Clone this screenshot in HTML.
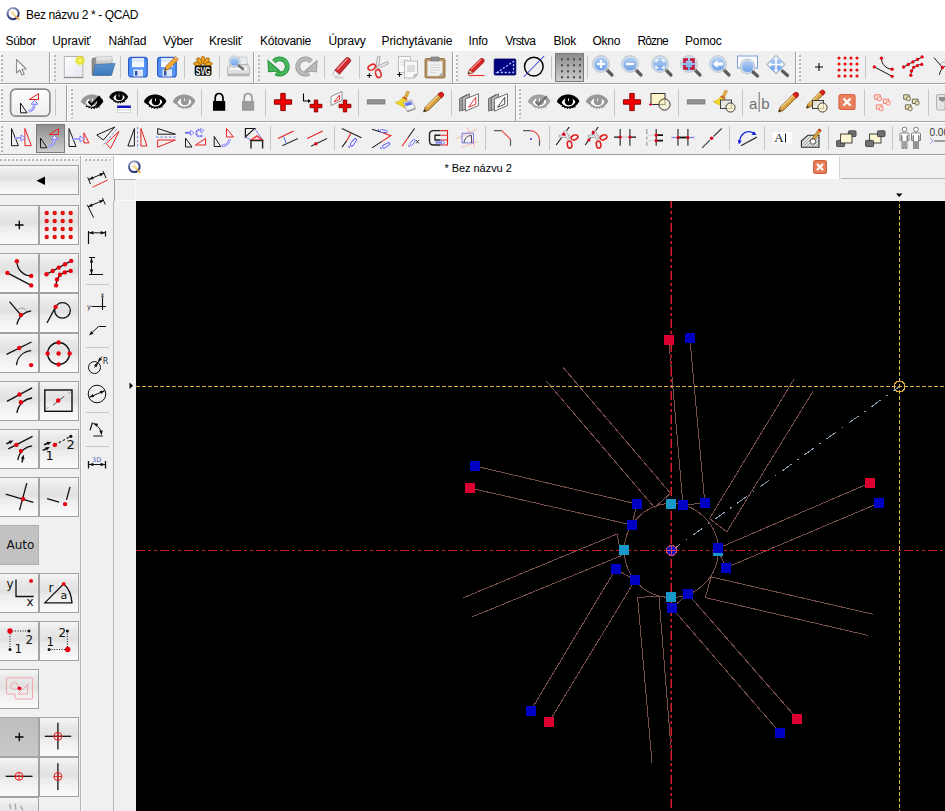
<!DOCTYPE html>
<html><head><meta charset="utf-8"><title>Bez názvu 2 * - QCAD</title>
<style>
*{box-sizing:border-box;margin:0;padding:0}
html,body{width:945px;height:811px;overflow:hidden;background:#f0f0f0;font-family:"Liberation Sans",sans-serif;font-size:12px;color:#000}
body{position:relative}
.a{position:absolute}
.ic{position:absolute;overflow:visible}
#title{left:0;top:0;width:945px;height:30px;background:#fff}
#title span{position:absolute;left:26px;top:8px;font-size:12px;white-space:nowrap;letter-spacing:-.37px}
#menu{left:0;top:30px;width:945px;height:21px;background:#fff}
#menu span{position:absolute;top:4px;white-space:nowrap;font-size:12px}
.vs{position:absolute;width:1px;background:#c6c6c6}
.hs{position:absolute;height:1px;background:#c6c6c6}
.tbv{position:absolute;width:2px;background:linear-gradient(90deg,#a0a0a0 50%,#fff 50%)}
.tbh{position:absolute;height:2px;background:linear-gradient(#a0a0a0 50%,#fff 50%)}
.gv{position:absolute;width:3px;background:linear-gradient(#b6b6b6 0 2px,transparent 2px 4px) 1px 1px/2px 4px repeat-y,linear-gradient(#fff 0 2px,transparent 2px 4px) 0 0/2px 4px repeat-y}
.gh{position:absolute;height:3px;background:linear-gradient(90deg,#b6b6b6 0 2px,transparent 2px 4px) 1px 1px/4px 2px repeat-x,linear-gradient(90deg,#fff 0 2px,transparent 2px 4px) 0 0/4px 2px repeat-x}
.pb{position:absolute;border:1px solid #7c7c7c;background:linear-gradient(#8e8e8e,#cdcdcd)}
.sb{position:absolute;width:40px;height:40px;border:1px solid #a2a2a2;background:linear-gradient(#f7f7f7 0,#eaeaea 18%,#e1e1e1 47%,#ececec 56%,#fbfbfb 100%)}
.sb svg{position:absolute;left:3px;top:3px;overflow:visible}
#canvas{left:136px;top:201px;width:809px;height:610px;background:#000}
</style></head><body>
<svg width="0" height="0" style="position:absolute"><defs>
<linearGradient id="gDoc" x1="0" y1="0" x2="1" y2="1"><stop offset="0" stop-color="#fff"/><stop offset="1" stop-color="#e4e6ee"/></linearGradient>
<radialGradient id="gGlow"><stop offset="0" stop-color="#ffff90"/><stop offset=".55" stop-color="#e8e020"/><stop offset="1" stop-color="#e8e020" stop-opacity="0"/></radialGradient>
<linearGradient id="gFold" x1="0" y1="0" x2="0" y2="1"><stop offset="0" stop-color="#5a92d0"/><stop offset="1" stop-color="#3c78b8"/></linearGradient>
<linearGradient id="gPaper" x1="0" y1="0" x2="0" y2="1"><stop offset="0" stop-color="#f4f4f4"/><stop offset="1" stop-color="#a8a8a8"/></linearGradient>
<linearGradient id="gFlop" x1="0" y1="0" x2="0" y2="1"><stop offset="0" stop-color="#4a8cf4"/><stop offset="1" stop-color="#5a98f8"/></linearGradient>
<linearGradient id="gLens" x1="0" y1="0" x2="0" y2="1"><stop offset="0" stop-color="#b4d0f4"/><stop offset="1" stop-color="#6ea2e6"/></linearGradient>
<linearGradient id="gBtn" x1="0" y1="0" x2="0" y2="1"><stop offset="0" stop-color="#8c8c8c"/><stop offset="1" stop-color="#c8c8c8"/></linearGradient>
<linearGradient id="gPencil" x1="0" y1="0" x2="1" y2="1"><stop offset="0" stop-color="#e8b860"/><stop offset="1" stop-color="#b07820"/></linearGradient>
<g id="mag"><circle cx="10" cy="10" r="7.6" fill="#d8e4f0" stroke="#b4bcc8" stroke-width="1"/><circle cx="10" cy="10" r="6" fill="url(#gLens)"/><path d="M15.5 15.5 L21 21" stroke="#606060" stroke-width="3" stroke-linecap="round"/><path d="M14.5 14.5 L16 16" stroke="#a0a0a0" stroke-width="2"/></g>
<g id="eye"><path d="M0.8 11.5 C3 6.5 8 4.6 12 4.6 C17 4.6 21.5 7 23.4 11.2 C22.5 13 21.2 14.6 19.3 16 L19.8 17.6 L17.8 16.9 L17.2 18.6 L15.5 17.4 L14.2 19.2 L13 17.7 L11.2 19.2 L10.4 17.5 L8.2 18.5 L8.1 16.7 L5.6 17.2 L6.1 15.4 C4 14.5 1.8 13.2 0.8 11.5 Z"/><path d="M5.6 12.4 C7.5 8.8 10 7.8 12.5 7.8 C15.8 7.8 18.3 9.4 19.4 12 C18 15 15.3 16.4 12.5 16.4 C9.7 16.4 7 15 5.6 12.4 Z" fill="#fff"/><circle cx="12.9" cy="11.2" r="4.1"/><path d="M12 8.4 L13.1 8.4 L12.9 11.2 L12.3 11.2 Z" fill="#fff"/></g>
<g id="plusR"><path d="M9.8 3.4 h4.4 v6.4 h6.4 v4.4 h-6.4 v6.4 h-4.4 v-6.4 h-6.4 v-4.4 h6.4 Z" fill="#f00000" stroke="#900000" stroke-width="1"/></g>
<g id="plusS"><path d="M4.8 0.6 h3.4 v4.2 h4.2 v3.4 h-4.2 v4.2 h-3.4 v-4.2 h-4.2 v-3.4 h4.2 Z" fill="#e80000" stroke="#900000" stroke-width="1"/></g>
<g id="pencilY"><path d="M1.5 22 L3.2 17.2 L17.2 3.2 C18.4 2 20 2.2 20.8 3 C21.7 4 21.6 5.4 20.6 6.4 L6.4 20.4 Z" fill="#d8a040" stroke="#7a5818" stroke-width=".8"/><path d="M4.5 17.3 L18 3.8" stroke="#f0cc80" stroke-width="1.4"/><path d="M17 3.4 C18.2 2.2 20 2.4 20.8 3.2 C21.8 4.2 21.8 5.8 20.8 6.8 L19.5 8 L15.8 4.5 Z" fill="#e02020" stroke="#900" stroke-width=".6"/><path d="M1.5 22 L2.6 19 L4.5 21 Z" fill="#403010"/></g>
<g id="broom"><path d="M13 1 L15.5 2 L12.5 8 L10.3 7 Z" fill="#e8b040" stroke="#a87820" stroke-width=".5"/><path d="M9 6.5 L13.5 8.8 L12.8 10.3 L8.3 8 Z" fill="#d04020"/><path d="M8.3 8 L12.8 10.3 C13 14 12 16 11 18 L1 12.5 C4 12 7 10.5 8.3 8 Z" fill="#f0d820" stroke="#c8a810" stroke-width=".5"/></g>
<g id="blk"><path d="M1 0.5 h6.5 v5 h-6.5 Z" stroke-width="1"/><circle cx="6.5" cy="5" r="2.4" stroke-width=".9"/></g>
</defs></svg>
<div id="title" class="a"><svg class="ic" style="left:5px;top:5px" width="18" height="18" viewBox="0 0 18 18"><defs><linearGradient id="gQ" x1="0.2" y1="0" x2="0.7" y2="1"><stop offset="0" stop-color="#a4aecc"/><stop offset=".5" stop-color="#44508c"/><stop offset="1" stop-color="#262c6c"/></linearGradient></defs><circle cx="8.1" cy="8.6" r="5.6" fill="#fbfbfd" stroke="url(#gQ)" stroke-width="2"/><path d="M8.1 8.6 L8.1 5 M8.1 8.6 L4.8 8.6 M8.1 8.6 L5.8 6.2" stroke="#f0d8c0" stroke-width=".8"/><path d="M7.6 8.1 L13.8 14.4" stroke="#e8a848" stroke-width="1.7" stroke-linecap="round"/><path d="M7.4 7.9 L10.5 11" stroke="#f4e090" stroke-width="1.5" stroke-linecap="round"/></svg><span>Bez názvu 2 * - QCAD</span></div>
<div id="menu" class="a"><span style="left:5.5px;letter-spacing:-0.31px">Súbor</span><span style="left:52.3px;letter-spacing:-0.10px">Upraviť</span><span style="left:108.4px;letter-spacing:-0.18px">Náhľad</span><span style="left:163px;letter-spacing:-0.27px">Výber</span><span style="left:209px;letter-spacing:-0.22px">Kresliť</span><span style="left:260px;letter-spacing:-0.26px">Kótovanie</span><span style="left:328.5px;letter-spacing:-0.15px">Úpravy</span><span style="left:381.5px;letter-spacing:-0.09px">Prichytávanie</span><span style="left:468.5px;letter-spacing:-0.18px">Info</span><span style="left:505.3px;letter-spacing:-0.61px">Vrstva</span><span style="left:553.5px;letter-spacing:-0.21px">Blok</span><span style="left:592.6px;letter-spacing:-0.32px">Okno</span><span style="left:637.4px;letter-spacing:-0.86px">Rôzne</span><span style="left:685px;letter-spacing:-0.13px">Pomoc</span></div>
<div class="tbh" style="left:0;top:83px;width:945px"></div>
<div class="tbh" style="left:0;top:121px;width:945px"></div>
<div class="tbh" style="left:0;top:154px;width:945px"></div>
<div class="tbv" style="left:49px;top:52px;height:31px"></div>
<div class="tbv" style="left:253px;top:52px;height:31px"></div>
<div class="tbv" style="left:452px;top:52px;height:31px"></div>
<div class="tbv" style="left:795px;top:52px;height:31px"></div>
<div class="tbv" style="left:66px;top:85px;height:36px"></div>
<div class="tbv" style="left:515px;top:85px;height:36px"></div>
<div class="gv" style="left:0px;top:54px;height:27px"></div>
<div class="gv" style="left:53px;top:54px;height:27px"></div>
<div class="gv" style="left:257px;top:54px;height:27px"></div>
<div class="gv" style="left:455px;top:54px;height:27px"></div>
<div class="gv" style="left:798px;top:54px;height:27px"></div>
<div class="gv" style="left:0px;top:88px;height:30px"></div>
<div class="gv" style="left:70px;top:88px;height:30px"></div>
<div class="gv" style="left:518px;top:88px;height:30px"></div>
<div class="gv" style="left:0px;top:125px;height:27px"></div>
<div class="vs" style="left:120px;top:56px;height:23px"></div>
<div class="vs" style="left:184px;top:56px;height:23px"></div>
<div class="vs" style="left:219px;top:56px;height:23px"></div>
<div class="vs" style="left:324px;top:56px;height:23px"></div>
<div class="vs" style="left:359px;top:56px;height:23px"></div>
<div class="vs" style="left:551px;top:56px;height:23px"></div>
<div class="vs" style="left:587px;top:56px;height:23px"></div>
<div class="vs" style="left:865px;top:56px;height:23px"></div>
<div class="vs" style="left:55px;top:89px;height:27px"></div>
<div class="vs" style="left:137px;top:89px;height:27px"></div>
<div class="vs" style="left:201px;top:89px;height:27px"></div>
<div class="vs" style="left:265px;top:89px;height:27px"></div>
<div class="vs" style="left:358px;top:89px;height:27px"></div>
<div class="vs" style="left:451px;top:89px;height:27px"></div>
<div class="vs" style="left:614px;top:89px;height:27px"></div>
<div class="vs" style="left:678px;top:89px;height:27px"></div>
<div class="vs" style="left:742px;top:89px;height:27px"></div>
<div class="vs" style="left:864px;top:89px;height:27px"></div>
<div class="vs" style="left:928px;top:89px;height:27px"></div>
<div class="vs" style="left:270px;top:126px;height:24px"></div>
<div class="vs" style="left:334px;top:126px;height:24px"></div>
<div class="vs" style="left:485px;top:126px;height:24px"></div>
<div class="vs" style="left:549px;top:126px;height:24px"></div>
<div class="vs" style="left:729px;top:126px;height:24px"></div>
<div class="vs" style="left:764px;top:126px;height:24px"></div>
<div class="vs" style="left:828px;top:126px;height:24px"></div>
<div class="vs" style="left:892px;top:126px;height:24px"></div>
<div class="pb" style="left:555px;top:53px;width:29px;height:29px"></div>
<div class="pb" style="left:36px;top:123.5px;width:29px;height:29px"></div>
<svg class="ic" style="left:8px;top:86px" width="46" height="34" viewBox="0 0 46 34"><defs><linearGradient id="gRB" x1="0" y1="0" x2="0" y2="1"><stop offset="0" stop-color="#fdfdfd"/><stop offset="1" stop-color="#eeeeee"/></linearGradient></defs><rect x="2.6" y="3.2" width="39.3" height="27" rx="5" fill="url(#gRB)" stroke="#8c8c8c" stroke-width="1.7"/></svg>
<svg class="ic" style="left:9px;top:55px" width="24" height="24" viewBox="0 0 24 24"><path d="M7.5 4.5 L7.5 18 L10.8 15 L13 20 L15.2 19 L13 14.2 L17.2 14 Z" fill="#fafafa" stroke="#8c8c8c" stroke-width="1.1" stroke-linejoin="round"/></svg>
<svg class="ic" style="left:62px;top:55px" width="24" height="24" viewBox="0 0 24 24"><rect x="2.3" y="1.5" width="18.6" height="21" fill="url(#gDoc)" stroke="#b4b4b4" stroke-width="1"/><path d="M2.3 22.5 h18.6" stroke="#909090" stroke-width="1.4"/><circle cx="18" cy="5.5" r="5.5" fill="url(#gGlow)"/></svg>
<svg class="ic" style="left:91px;top:55px" width="24" height="24" viewBox="0 0 24 24"><path d="M1 4 L1 20 L19 20 L19 5.5 L9 5.5 L8 3 L2 3 Z" fill="#8e8e8e" stroke="#707070" stroke-width=".6"/><path d="M5 2 L21 1.5 L21.5 12 L5 12 Z" fill="url(#gPaper)" stroke="#a0a0a0" stroke-width=".5"/><path d="M4 9.5 L24 8.5 L20.5 20.5 L2 20.5 Z" fill="url(#gFold)" stroke="#35689c" stroke-width=".6"/></svg>
<svg class="ic" style="left:126px;top:55px" width="24" height="24" viewBox="0 0 24 24"><rect x="2.6" y="2.3" width="18.6" height="19.6" rx="2.5" fill="url(#gFlop)" stroke="#2c5cc8" stroke-width="1.2"/><rect x="6" y="3.2" width="12" height="9" fill="#f4f8ff"/><path d="M6 3.2 h12 v4 h-12 Z" fill="#dce8fc"/><rect x="7.5" y="14.5" width="9.5" height="7" fill="#dfe6f4"/><rect x="9" y="16" width="2.4" height="4.5" fill="#2c50b0"/></svg>
<svg class="ic" style="left:155px;top:55px" width="24" height="24" viewBox="0 0 24 24"><rect x="2.6" y="2.3" width="18.6" height="19.6" rx="2.5" fill="url(#gFlop)" stroke="#2c5cc8" stroke-width="1.2"/><rect x="6" y="3.2" width="12" height="9" fill="#f4f8ff"/><path d="M6 3.2 h12 v4 h-12 Z" fill="#dce8fc"/><rect x="7.5" y="14.5" width="9.5" height="7" fill="#dfe6f4"/><rect x="9" y="16" width="2.4" height="4.5" fill="#2c50b0"/><path d="M9.5 15.5 L10.8 11.5 L20.5 1.5 L23.5 4.2 L13.5 14.3 Z" fill="#f0a838" stroke="#b06a10" stroke-width=".7"/><path d="M20.5 1.5 L23.5 4.2 L22.3 5.4 L19.3 2.7 Z" fill="#e8a080"/><path d="M9.5 15.5 L10.2 13.3 L11.6 14.8 Z" fill="#303030"/></svg>
<svg class="ic" style="left:191px;top:55px" width="24" height="24" viewBox="0 0 24 24"><ellipse cx="12" cy="5" rx="2" ry="4" transform="rotate(-76 12 10.5)" fill="#f4a420" stroke="#7a4800" stroke-width=".6"/><ellipse cx="12" cy="5" rx="2" ry="4" transform="rotate(-38 12 10.5)" fill="#f4a420" stroke="#7a4800" stroke-width=".6"/><ellipse cx="12" cy="5" rx="2" ry="4" transform="rotate(0 12 10.5)" fill="#f4a420" stroke="#7a4800" stroke-width=".6"/><ellipse cx="12" cy="5" rx="2" ry="4" transform="rotate(38 12 10.5)" fill="#f4a420" stroke="#7a4800" stroke-width=".6"/><ellipse cx="12" cy="5" rx="2" ry="4" transform="rotate(76 12 10.5)" fill="#f4a420" stroke="#7a4800" stroke-width=".6"/><rect x="3.7" y="10.6" width="16.8" height="10.2" rx="1.8" fill="#0a0a0a"/><text x="12.1" y="19.6" font-family="Liberation Sans, sans-serif" font-weight="bold" font-size="10.5" fill="#fff" text-anchor="middle" textLength="14.6" lengthAdjust="spacingAndGlyphs">SVG</text></svg>
<svg class="ic" style="left:225.5px;top:55px" width="24" height="24" viewBox="0 0 24 24"><path d="M4 9 L18 5 L22 9 L22 18 L4 18 Z" fill="#dcdcdc" stroke="#b4b4b4" stroke-width=".7"/><rect x="13" y="2" width="8" height="9" fill="#e8ecf0" stroke="#b8b8b8" stroke-width=".6"/><path d="M1.5 12 L5 9.5 L21 9.5 L23.5 12 L23.5 19 L1.5 19 Z" fill="#e0e0e0" stroke="#a8a8a8" stroke-width=".7"/><path d="M1.5 19 h22 v2.2 h-22 Z" fill="#b4b4b4"/><path d="M4 13 h17 v1.6 h-17 Z" fill="#f8f8f8"/><circle cx="8.5" cy="6.5" r="5.6" fill="#dfe6ee" stroke="#b0b8c4" stroke-width=".8"/><circle cx="8.5" cy="6.5" r="4.2" fill="url(#gLens)"/><path d="M12.5 10.5 L17 14" stroke="#707070" stroke-width="2.4" stroke-linecap="round"/></svg>
<svg class="ic" style="left:265.5px;top:55px" width="24" height="24" viewBox="0 0 24 24"><path d="M7.9 6.6 A7.6 7.6 0 1 1 9.9 18.1" fill="none" stroke="#1e8a34" stroke-width="4.8"/><path d="M1.4 4.4 L2.1 17.3 L15.2 16.6 Z" fill="#1e8a34"/><path d="M7.9 6.6 A7.6 7.6 0 1 1 9.9 18.1" fill="none" stroke="#44b458" stroke-width="3.4"/><path d="M2.2 6.3 L2.8 16.5 L13.2 16 Z" fill="#44b458"/></svg>
<svg class="ic" style="left:295px;top:55px" width="24" height="24" viewBox="0 0 24 24"><g transform="translate(24,0) scale(-1,1)"><path d="M7.9 6.6 A7.6 7.6 0 1 1 9.9 18.1" fill="none" stroke="#969696" stroke-width="4.8"/><path d="M1.4 4.4 L2.1 17.3 L15.2 16.6 Z" fill="#969696"/><path d="M7.9 6.6 A7.6 7.6 0 1 1 9.9 18.1" fill="none" stroke="#bababa" stroke-width="3.4"/><path d="M2.2 6.3 L2.8 16.5 L13.2 16 Z" fill="#bababa"/></g></svg>
<svg class="ic" style="left:330.5px;top:55px" width="24" height="24" viewBox="0 0 24 24"><path d="M3.5 15.5 L15 3 C16.8 1.6 20.2 4 19.5 6.5 L8.2 19.5 Z" fill="#d42830" stroke="#8a0c14" stroke-width=".8"/><path d="M6 14.8 L16.5 3.6" stroke="#f49098" stroke-width="1.4"/><path d="M3.5 15.5 L8.2 19.5 L6.5 21.5 C4.5 22 2 20.2 2 18 Z" fill="#f6f6f6" stroke="#a8a8a8" stroke-width=".7"/><path d="M3.5 22.8 h9" stroke="#c8c8c8" stroke-width="1.2"/></svg>
<svg class="ic" style="left:365px;top:55px" width="24" height="24" viewBox="0 0 24 24"><path d="M12.5 1.5 L15 1 L13.5 13 L11 12 Z" fill="#e8e8e8" stroke="#909090" stroke-width=".7"/><path d="M22.5 6.5 L23.5 8.8 L12.5 14 L11.5 11.5 Z" fill="#e8e8e8" stroke="#909090" stroke-width=".7"/><ellipse cx="6.8" cy="12.3" rx="4" ry="2.6" transform="rotate(-28 6.8 12.3)" fill="none" stroke="#e03030" stroke-width="1.6"/><ellipse cx="13.3" cy="18.6" rx="2.6" ry="4" transform="rotate(-15 13.3 18.6)" fill="none" stroke="#e03030" stroke-width="1.6"/><path d="M2 20.5 h4.6 M4.3 18.2 v4.6" stroke="#000" stroke-width="1.1"/></svg>
<svg class="ic" style="left:394.5px;top:55px" width="24" height="24" viewBox="0 0 24 24"><path d="M3.5 1.5 h12 v16 h-12 Z" fill="#fafafa" stroke="#b0b0b0" stroke-width=".8"/><path d="M5.5 5 h8 M5.5 7.5 h8 M5.5 10 h4" stroke="#d0d0d0" stroke-width="1"/><path d="M9.5 6 h13 v13.5 l-3.5 3.5 h-9.5 Z" fill="#f8f8f8" stroke="#a8a8a8" stroke-width=".8"/><path d="M12 10 h8 v7 h-8 Z" fill="#dcdcdc"/><path d="M22.5 19.5 h-3.5 v3.5 Z" fill="#c8c8c8" stroke="#a0a0a0" stroke-width=".6"/><path d="M2.2 19.5 h4.6 M4.5 17.2 v4.6" stroke="#000" stroke-width="1.1"/></svg>
<svg class="ic" style="left:423px;top:55px" width="24" height="24" viewBox="0 0 24 24"><rect x="2" y="3.5" width="20" height="19.5" rx="1.5" fill="#b89060" stroke="#8a6838" stroke-width=".8"/><rect x="4.5" y="6" width="15" height="15" fill="#f0f0f0" stroke="#c0c0c0" stroke-width=".5"/><path d="M7 10 h10 M7 12.5 h10 M7 15 h10 M7 17.5 h6" stroke="#d4d4d4" stroke-width="1.2"/><path d="M8 2 h8 v4 h-8 Z" fill="#909090" stroke="#686868" stroke-width=".6"/><path d="M19.5 17 v4 h-4 Z" fill="#a8a8a8"/></svg>
<svg class="ic" style="left:464px;top:55px" width="24" height="24" viewBox="0 0 24 24"><path d="M4 19 L5.6 14.6 L16 4.2 C17.2 3.2 18.8 3.4 19.6 4.3 C20.4 5.2 20.3 6.6 19.3 7.6 L8.8 17.8 Z" fill="#dc2424" stroke="#8a0a0a" stroke-width=".8"/><path d="M7 14.3 L17 4.5" stroke="#f88888" stroke-width="1.3"/><path d="M4 19 L5.6 14.6 L8.8 17.8 Z" fill="#f0c8a0" stroke="#8a5a30" stroke-width=".5"/><path d="M4 19 L4.7 17.1 L6 18.3 Z" fill="#202020"/><path d="M4.5 20.5 h16" stroke="#f03030" stroke-width="1.1"/></svg>
<svg class="ic" style="left:493px;top:55px" width="24" height="24" viewBox="0 0 24 24"><rect x="1.2" y="4" width="21.6" height="16" rx="1" fill="#000080" stroke="#000060" stroke-width=".8"/><path d="M4 17.5 h16.5 v-11 Z" fill="none" stroke="#a8c0ff" stroke-width="1.3" stroke-dasharray="2.2 1.6"/></svg>
<svg class="ic" style="left:522px;top:55px" width="24" height="24" viewBox="0 0 24 24"><circle cx="11.8" cy="11.6" r="9.3" fill="none" stroke="#000" stroke-width="1.5"/><path d="M22.2 1 L1.8 21.8" stroke="#2020d0" stroke-width="1"/></svg>
<svg class="ic" style="left:558px;top:55px" width="24" height="24" viewBox="0 0 24 24"><rect x="3" y="3.3" width="2" height="2" fill="#484848"/><rect x="3" y="9.3" width="2" height="2" fill="#484848"/><rect x="3" y="15.3" width="2" height="2" fill="#484848"/><rect x="3" y="21.3" width="2" height="2" fill="#484848"/><rect x="9" y="3.3" width="2" height="2" fill="#484848"/><rect x="9" y="9.3" width="2" height="2" fill="#484848"/><rect x="9" y="15.3" width="2" height="2" fill="#484848"/><rect x="9" y="21.3" width="2" height="2" fill="#484848"/><rect x="15" y="3.3" width="2" height="2" fill="#484848"/><rect x="15" y="9.3" width="2" height="2" fill="#484848"/><rect x="15" y="15.3" width="2" height="2" fill="#484848"/><rect x="15" y="21.3" width="2" height="2" fill="#484848"/><rect x="21" y="3.3" width="2" height="2" fill="#484848"/><rect x="21" y="9.3" width="2" height="2" fill="#484848"/><rect x="21" y="15.3" width="2" height="2" fill="#484848"/><rect x="21" y="21.3" width="2" height="2" fill="#484848"/></svg>
<svg class="ic" style="left:590px;top:55px" width="24" height="24" viewBox="0 0 24 24"><circle cx="11" cy="9" r="8.4" fill="#d4dfec" stroke="#b4bec8" stroke-width=".8"/><circle cx="11" cy="9" r="6.6" fill="url(#gLens)"/><path d="M17.5 15.5 L22 20" stroke="#5c5c5c" stroke-width="3.2" stroke-linecap="round"/><path d="M16 14 L17.5 15.5" stroke="#a8a8a8" stroke-width="2.2"/><path d="M7 9 h8 M11 5 v8" stroke="#fff" stroke-width="2.2"/></svg>
<svg class="ic" style="left:619px;top:55px" width="24" height="24" viewBox="0 0 24 24"><circle cx="11" cy="9" r="8.4" fill="#d4dfec" stroke="#b4bec8" stroke-width=".8"/><circle cx="11" cy="9" r="6.6" fill="url(#gLens)"/><path d="M17.5 15.5 L22 20" stroke="#5c5c5c" stroke-width="3.2" stroke-linecap="round"/><path d="M16 14 L17.5 15.5" stroke="#a8a8a8" stroke-width="2.2"/><path d="M7 9 h8" stroke="#fff" stroke-width="2.2"/></svg>
<svg class="ic" style="left:649px;top:55px" width="24" height="24" viewBox="0 0 24 24"><circle cx="11" cy="9" r="8.4" fill="#d4dfec" stroke="#b4bec8" stroke-width=".8"/><circle cx="11" cy="9" r="6.6" fill="url(#gLens)"/><path d="M17.5 15.5 L22 20" stroke="#5c5c5c" stroke-width="3.2" stroke-linecap="round"/><path d="M16 14 L17.5 15.5" stroke="#a8a8a8" stroke-width="2.2"/><path d="M7 7.5 v-2.5 h2.5 M12.5 5 h2.5 v2.5 M15 10.5 v2.5 h-2.5 M9.5 13 h-2.5 v-2.5" stroke="#fff" stroke-width="1.4" fill="none"/></svg>
<svg class="ic" style="left:678px;top:55px" width="24" height="24" viewBox="0 0 24 24"><circle cx="11" cy="9" r="8.4" fill="#d4dfec" stroke="#b4bec8" stroke-width=".8"/><circle cx="11" cy="9" r="6.6" fill="url(#gLens)"/><path d="M17.5 15.5 L22 20" stroke="#5c5c5c" stroke-width="3.2" stroke-linecap="round"/><path d="M16 14 L17.5 15.5" stroke="#a8a8a8" stroke-width="2.2"/><path d="M6.5 8 v-3.5 h3.5 M12 4.5 h3.5 v3.5 M15.5 10 v3.5 h-3.5 M10 13.5 h-3.5 v-3.5" stroke="#c81030" stroke-width="2.4" fill="none"/></svg>
<svg class="ic" style="left:707px;top:55px" width="24" height="24" viewBox="0 0 24 24"><circle cx="11" cy="9" r="8.4" fill="#d4dfec" stroke="#b4bec8" stroke-width=".8"/><circle cx="11" cy="9" r="6.6" fill="url(#gLens)"/><path d="M17.5 15.5 L22 20" stroke="#5c5c5c" stroke-width="3.2" stroke-linecap="round"/><path d="M16 14 L17.5 15.5" stroke="#a8a8a8" stroke-width="2.2"/><path d="M6 9 L10.5 5 L10.5 7.5 L16 7.5 L16 10.5 L10.5 10.5 L10.5 13 Z" fill="#fff"/></svg>
<svg class="ic" style="left:736px;top:55px" width="24" height="24" viewBox="0 0 24 24"><rect x="1.5" y="1" width="20" height="12" fill="#fcfcff" stroke="#7c9cd8" stroke-width="1"/><circle cx="11.5" cy="11.5" r="7.4" fill="#d4dfec" stroke="#b4bec8" stroke-width=".8"/><circle cx="11.5" cy="11.5" r="5.8" fill="url(#gLens)"/><path d="M17 17 L21.5 21" stroke="#5c5c5c" stroke-width="3.2" stroke-linecap="round"/></svg>
<svg class="ic" style="left:765px;top:55px" width="24" height="24" viewBox="0 0 24 24"><path d="M11 0.5 L20 9.5 L11 18.5 L2 9.5 Z" fill="#7ca8e4" stroke="#b4c0d0" stroke-width="1.5" stroke-linejoin="round"/><circle cx="11" cy="9.5" r="7" fill="url(#gLens)"/><path d="M11 2.5 v14 M4 9.5 h14" stroke="#fff" stroke-width="1.6"/><path d="M11 1.5 l-2.5 3 h5 Z M11 17.5 l-2.5 -3 h5 Z M3 9.5 l3 -2.5 v5 Z M19 9.5 l-3 -2.5 v5 Z" fill="#fff"/><path d="M17.5 16 L22.5 20.5" stroke="#5c5c5c" stroke-width="3.2" stroke-linecap="round"/></svg>
<svg class="ic" style="left:806.5px;top:55px" width="24" height="24" viewBox="0 0 24 24"><path d="M8 12 h8 M12 8 v8" stroke="#000" stroke-width="1.05"/></svg>
<svg class="ic" style="left:836px;top:55px" width="24" height="24" viewBox="0 0 24 24"><circle cx="3" cy="3" r="1.55" fill="#e81010"/><circle cx="3" cy="9" r="1.55" fill="#e81010"/><circle cx="3" cy="15" r="1.55" fill="#e81010"/><circle cx="3" cy="21" r="1.55" fill="#e81010"/><circle cx="9" cy="3" r="1.55" fill="#e81010"/><circle cx="9" cy="9" r="1.55" fill="#e81010"/><circle cx="9" cy="15" r="1.55" fill="#e81010"/><circle cx="9" cy="21" r="1.55" fill="#e81010"/><circle cx="15" cy="3" r="1.55" fill="#e81010"/><circle cx="15" cy="9" r="1.55" fill="#e81010"/><circle cx="15" cy="15" r="1.55" fill="#e81010"/><circle cx="15" cy="21" r="1.55" fill="#e81010"/><circle cx="21" cy="3" r="1.55" fill="#e81010"/><circle cx="21" cy="9" r="1.55" fill="#e81010"/><circle cx="21" cy="15" r="1.55" fill="#e81010"/><circle cx="21" cy="21" r="1.55" fill="#e81010"/></svg>
<svg class="ic" style="left:871px;top:54.5px" width="24" height="24" viewBox="0 0 32 32"><path d="M13.9 4.2 C13.9 12 20 18.9 28.2 18.9" fill="none" stroke="#101010" stroke-width="1.3"/><path d="M4.4 15.9 L28.2 28.4" stroke="#101010" stroke-width="1.3" /><circle cx="13.9" cy="4.2" r="2.2" fill="#e80010"/><circle cx="28.2" cy="18.9" r="2.2" fill="#e80010"/><circle cx="4.4" cy="15.9" r="2.2" fill="#e80010"/><circle cx="28.2" cy="28.4" r="2.2" fill="#e80010"/></svg>
<svg class="ic" style="left:900.5px;top:54.2px" width="24" height="24" viewBox="0 0 32 32"><path d="M3.5 17.3 L28.2 3.9" stroke="#101010" stroke-width="1.3" /><path d="M13.1 28.4 C13.5 20 19 14.5 27.7 13.9" fill="none" stroke="#101010" stroke-width="1.3"/><circle cx="3.5" cy="17.3" r="2.2" fill="#e80010"/><circle cx="9.7" cy="14.0" r="2.2" fill="#e80010"/><circle cx="15.8" cy="10.6" r="2.2" fill="#e80010"/><circle cx="22.0" cy="7.2" r="2.2" fill="#e80010"/><circle cx="28.2" cy="3.9" r="2.2" fill="#e80010"/><circle cx="13.1" cy="28.4" r="2.2" fill="#e80010"/><circle cx="14" cy="22.5" r="2.2" fill="#e80010"/><circle cx="16.9" cy="17.7" r="2.2" fill="#e80010"/><circle cx="21.8" cy="15.4" r="2.2" fill="#e80010"/><circle cx="27.7" cy="13.9" r="2.2" fill="#e80010"/></svg>
<svg class="ic" style="left:929px;top:54.2px" width="24" height="24" viewBox="0 0 32 32"><path d="M6.5 4.7 L17.9 18" stroke="#101010" stroke-width="1.3" /><path d="M28.2 13.9 C22 14.5 15.5 19 13.9 27.7" fill="none" stroke="#101010" stroke-width="1.3"/><path d="M14.8 13.5 C16 10.5 21.5 10 23.5 13.8" fill="none" stroke="#808080" stroke-width=".7"/><circle cx="17.9" cy="18" r="2.2" fill="#e80010"/></svg>
<svg class="ic" style="left:18px;top:90.5px" width="24" height="24" viewBox="0 0 24 24"><path d="M2.5 12 L2.5 21.8 L9 21.8 Z" fill="none" stroke="#181818" stroke-width="1"/><path d="M20.5 2.7 L20.5 8.5 L11.2 8.5 Z" fill="none" stroke="#e82020" stroke-width="1"/><path d="M10.5 20.5 C14.5 19.5 16.5 16.5 16.5 13" fill="none" stroke="#8484ff" stroke-width="2.4"/><path d="M10.5 20.5 C14.5 19.5 16.5 16.5 16.5 13" fill="none" stroke="#d8d8ff" stroke-width="1"/><path d="M16.5 9.3 L19.8 13.2 L13.2 13.2 Z" fill="#fff" stroke="#7070ff" stroke-width="1"/></svg>
<svg class="ic" style="left:79.5px;top:89.5px" width="24" height="24" viewBox="0 0 24 24"><g fill="#989898"><use href="#eye"/></g><path d="M9 18.2 L8.1 16.7 L5.6 17.2 L6.1 15.4 C9 17 15 17.3 19.3 16 C21.2 14.6 22.5 13 23.4 11.2 C22.6 9.5 21.5 8.2 20.2 7.2 L17 10 C17.8 13.5 15.5 16.6 12 16.6 L10.4 17.5 Z" fill="#000"/><path d="M19.3 16 L19.8 17.6 L17.8 16.9 L17.2 18.6 L15.5 17.4 L14.2 19.2 L13 17.7 L11.2 19.2 L10.4 17.5 Z" fill="#000"/><path d="M8.5 11.5 L11.5 14.8 L19.8 6.3" fill="none" stroke="#000" stroke-width="2.1"/></svg>
<svg class="ic" style="left:108px;top:90px" width="24" height="24" viewBox="0 0 24 24"><g transform="translate(0.5,-2.5) scale(.84)" fill="#000"><use href="#eye"/></g><rect x="9.5" y="15.5" width="13" height="7" fill="#fff" stroke="#c0c0c0" stroke-width=".6"/><rect x="9.2" y="15.6" width="13.6" height="2.4" fill="#1010c8"/><path d="M9.5 20 h13" stroke="#c0c0c8" stroke-width=".8"/></svg>
<svg class="ic" style="left:143px;top:90px" width="24" height="24" viewBox="0 0 24 24"><g fill="#000"><use href="#eye"/></g></svg>
<svg class="ic" style="left:172px;top:90px" width="24" height="24" viewBox="0 0 24 24"><g fill="#989898"><use href="#eye"/></g></svg>
<svg class="ic" style="left:207px;top:90px" width="24" height="24" viewBox="0 0 24 24"><rect x="6" y="11" width="12.2" height="9.8" fill="#000"/><path d="M8.2 11 V8 C8.2 2 16 2 16 8 V11" fill="none" stroke="#000" stroke-width="1.7"/></svg>
<svg class="ic" style="left:236px;top:90px" width="24" height="24" viewBox="0 0 24 24"><rect x="6" y="11" width="12.2" height="9.8" fill="#9c9c9c"/><path d="M8.2 11 V8 C8.2 2 16 2 16 8 V11" fill="none" stroke="#9c9c9c" stroke-width="1.7"/></svg>
<svg class="ic" style="left:271px;top:89.8px" width="24" height="24" viewBox="0 0 24 24"><use href="#plusR"/></svg>
<svg class="ic" style="left:300px;top:90px" width="24" height="24" viewBox="0 0 24 24"><path d="M3.5 3.5 v7.5 h5.5" fill="none" stroke="#000" stroke-width="1.1"/><path d="M8 9 l3 2 l-3 2 Z" fill="#000"/><g transform="translate(9.5,9.5)"><use href="#plusS"/></g></svg>
<svg class="ic" style="left:329px;top:90px" width="24" height="24" viewBox="0 0 24 24"><path d="M2 6.5 L13 1.5 L13 10.5 L2 15.5 Z" fill="#fcfcfc" stroke="#787878" stroke-width=".8"/><path d="M5 12 L10.5 5 L10.5 9.6 Z" fill="none" stroke="#e83030" stroke-width="1"/><g transform="translate(9.5,9.5)"><use href="#plusS"/></g></svg>
<svg class="ic" style="left:364px;top:90px" width="24" height="24" viewBox="0 0 24 24"><rect x="3.3" y="9.8" width="17.6" height="4.2" fill="#949494" stroke="#707070" stroke-width=".8"/></svg>
<svg class="ic" style="left:393px;top:90px" width="24" height="24" viewBox="0 0 24 24"><g transform="translate(1,0)"><use href="#broom"/></g><path d="M10 12.5 L18.5 10 L22.5 18 L14 21 Z" fill="#f4f4f8" stroke="#909090" stroke-width=".7"/><path d="M14 21 L22.5 18 L22.5 19.6 L14.3 22.6 Z" fill="#a0a0a0"/><path d="M11.5 13.2 L17.8 11.3 L19.5 14.5 L13 16.3 Z" fill="#6878e8"/></svg>
<svg class="ic" style="left:422px;top:90px" width="24" height="24" viewBox="0 0 24 24"><use href="#pencilY"/></svg>
<svg class="ic" style="left:457px;top:90px" width="24" height="24" viewBox="0 0 24 24"><g transform="translate(1.2,1.6) scale(.9,.87)"><path d="M1.5 8 L9.5 3.5 L9.5 18 L1.5 22.5 Z" fill="#a8a8a8" stroke="#484848" stroke-width=".8"/><path d="M4.5 7 L12.5 2.5 L12.5 17.5 L4.5 22 Z" fill="#b8b8b8" stroke="#484848" stroke-width=".8"/><path d="M8 8.5 L22.5 2.5 L22.5 16 L8 22.5 Z" fill="#fff" stroke="#484848" stroke-width=".9"/><path d="M11.5 18 L19.5 6.5 L19.5 14.5 Z" fill="none" stroke="#e83030" stroke-width="1.1"/></g></svg>
<svg class="ic" style="left:486px;top:90px" width="24" height="24" viewBox="0 0 24 24"><g transform="translate(1.2,1.6) scale(.9,.87)"><path d="M1.5 8 L9.5 3.5 L9.5 18 L1.5 22.5 Z" fill="#a8a8a8" stroke="#484848" stroke-width=".8"/><path d="M4.5 7 L12.5 2.5 L12.5 17.5 L4.5 22 Z" fill="#b8b8b8" stroke="#484848" stroke-width=".8"/><path d="M8 8.5 L22.5 2.5 L22.5 16 L8 22.5 Z" fill="#fff" stroke="#484848" stroke-width=".9"/><path d="M11.5 18 L19.5 6.5 L19.5 14.5 Z" fill="none" stroke="#404040" stroke-width="1.1"/></g></svg>
<svg class="ic" style="left:527px;top:89.5px" width="24" height="24" viewBox="0 0 24 24"><g fill="#a0a0a0"><use href="#eye"/></g><path d="M8.5 11.5 L11.5 14.8 L19.8 6.3" fill="none" stroke="#707070" stroke-width="2.1"/></svg>
<svg class="ic" style="left:556px;top:90px" width="24" height="24" viewBox="0 0 24 24"><g fill="#000"><use href="#eye"/></g></svg>
<svg class="ic" style="left:585px;top:90px" width="24" height="24" viewBox="0 0 24 24"><g fill="#989898"><use href="#eye"/></g></svg>
<svg class="ic" style="left:620px;top:89.8px" width="24" height="24" viewBox="0 0 24 24"><use href="#plusR"/></svg>
<svg class="ic" style="left:649px;top:90px" width="24" height="24" viewBox="0 0 24 24"><rect x="2" y="3.5" width="14" height="11" fill="#fdf4c8" stroke="#303030" stroke-width="1"/><circle cx="15.5" cy="14.5" r="5.6" fill="#fdf4c8" fill-opacity=".55" stroke="#303030" stroke-width="1"/><path d="M0 14.5 h3 M1.5 13 v3" stroke="#e00030" stroke-width="1"/></svg>
<svg class="ic" style="left:684px;top:90px" width="24" height="24" viewBox="0 0 24 24"><rect x="3.3" y="9.8" width="17.6" height="4.2" fill="#949494" stroke="#707070" stroke-width=".8"/></svg>
<svg class="ic" style="left:713px;top:90px" width="24" height="24" viewBox="0 0 24 24"><g transform="translate(-1,-1)"><use href="#broom"/></g><rect x="7.5" y="10" width="11" height="8.5" fill="#e8e8e0" stroke="#404040" stroke-width="1"/><circle cx="17.5" cy="17.5" r="4.6" fill="#fdf4c8" fill-opacity=".7" stroke="#404040" stroke-width="1"/></svg>
<svg class="ic" style="left:748px;top:90px" width="24" height="24" viewBox="0 0 24 24"><text x="1" y="18.5" font-family="Liberation Sans, sans-serif" font-size="15" fill="#707070">a</text><text x="13.2" y="18.5" font-family="Liberation Sans, sans-serif" font-size="15" fill="#707070">b</text><path d="M11.2 2 v20" stroke="#808080" stroke-width="1.2"/></svg>
<svg class="ic" style="left:777px;top:90px" width="24" height="24" viewBox="0 0 24 24"><use href="#pencilY"/></svg>
<svg class="ic" style="left:806px;top:90px" width="24" height="24" viewBox="0 0 24 24"><g transform="translate(-1,-2) scale(.92)"><use href="#pencilY"/></g><rect x="6.5" y="10.5" width="11" height="8" fill="#e8e8d8" fill-opacity=".85" stroke="#404040" stroke-width="1"/><circle cx="16.5" cy="17.5" r="4.6" fill="#fdf4c8" fill-opacity=".7" stroke="#404040" stroke-width="1"/></svg>
<svg class="ic" style="left:835px;top:90px" width="24" height="24" viewBox="0 0 24 24"><rect x="4" y="4.5" width="16" height="15" rx="2" fill="#e8805c" stroke="#d86040" stroke-width="1.2"/><path d="M8.5 8.5 L15.5 15.5 M15.5 8.5 L8.5 15.5" stroke="#fff" stroke-width="2.4"/></svg>
<svg class="ic" style="left:869.5px;top:90px" width="24" height="24" viewBox="0 0 24 24"><g stroke="#f07060" fill="#ffe4dc" transform="translate(1.6,1.8) scale(.87)"><g transform="translate(2.5,3)"><use href="#blk"/></g><g transform="translate(12.5,8)"><use href="#blk"/></g><g transform="translate(4.5,14.5)"><use href="#blk"/></g></g></svg>
<svg class="ic" style="left:899px;top:90px" width="24" height="24" viewBox="0 0 24 24"><g stroke="#5c5840" fill="#ece4b8" transform="translate(1.6,1.8) scale(.87)"><g transform="translate(2.5,3)"><use href="#blk"/></g><g transform="translate(12.5,8)"><use href="#blk"/></g><g transform="translate(4.5,14.5)"><use href="#blk"/></g></g></svg>
<svg class="ic" style="left:934px;top:92px" width="11" height="20" viewBox="0 0 11 20"><path d="M4 2.5 H11 V18 H4 Q2.5 18 2.5 16.5 V4 Q2.5 2.5 4 2.5 Z" fill="#e4e4e4" stroke="#b0b0b0" stroke-width="1"/><path d="M5 5 h6 v3 l-2 2 l-4 -2 Z" fill="#8c8c8c"/></svg>
<svg class="ic" style="left:9px;top:126px" width="24" height="24" viewBox="0 0 24 24"><path d="M2.5 2.5 L2.5 19.7 L9.4 19.7 Z" fill="none" stroke="#181818" stroke-width="1.0" stroke-linejoin="miter"/><path d="M15.9 2.5 L15.9 19.7 L22.3 19.7 Z" fill="none" stroke="#e82020" stroke-width="1.0" stroke-linejoin="miter"/><path d="M5.5 12 H12.5" stroke="#8484ff" stroke-width="2"/><path d="M6.0 12 H12.5" stroke="#d8d8ff" stroke-width=".7"/><path d="M12.0 9 L16.0 12 L12.0 15 Z" fill="#fff" stroke="#7070ff" stroke-width=".9"/></svg>
<svg class="ic" style="left:38px;top:126px" width="24" height="24" viewBox="0 0 24 24"><path d="M2.5 12 L2.5 21.8 L9 21.8 Z" fill="none" stroke="#181818" stroke-width="1"/><path d="M20.5 2.7 L20.5 8.5 L11.2 8.5 Z" fill="none" stroke="#e82020" stroke-width="1"/><path d="M10.5 20.5 C14.5 19.5 16.5 16.5 16.5 13" fill="none" stroke="#8484ff" stroke-width="2.4"/><path d="M10.5 20.5 C14.5 19.5 16.5 16.5 16.5 13" fill="none" stroke="#d8d8ff" stroke-width="1"/><path d="M16.5 9.3 L19.8 13.2 L13.2 13.2 Z" fill="#fff" stroke="#7070ff" stroke-width="1"/></svg>
<svg class="ic" style="left:67px;top:126px" width="24" height="24" viewBox="0 0 24 24"><path d="M2 2.5 L2 20.5 L9 20.5 Z" fill="none" stroke="#181818" stroke-width="1.0" stroke-linejoin="miter"/><path d="M16.9 6.8 L16.9 16.9 L21.9 16.9 Z" fill="none" stroke="#e82020" stroke-width="1.0" stroke-linejoin="miter"/><path d="M5.5 13 H13.5" stroke="#8484ff" stroke-width="2"/><path d="M6.0 13 H13.5" stroke="#d8d8ff" stroke-width=".7"/><path d="M13.0 10 L17.0 13 L13.0 16 Z" fill="#fff" stroke="#7070ff" stroke-width=".9"/></svg>
<svg class="ic" style="left:96px;top:126px" width="24" height="24" viewBox="0 0 24 24"><path d="M0.8 9 L18.8 1 L7.3 14 Z" fill="none" stroke="#181818" stroke-width="1.0" stroke-linejoin="miter"/><path d="M23 5.4 L10.2 17.6 L14.5 22.6 Z" fill="none" stroke="#e82020" stroke-width="1.0" stroke-linejoin="miter"/><path d="M20.5 3.5 L7.5 18.5" stroke="#6878e0" stroke-width=".9" stroke-dasharray="2.5 1.8"/></svg>
<svg class="ic" style="left:125px;top:126px" width="24" height="24" viewBox="0 0 24 24"><path d="M9.4 2.5 L2.9 20 L9.4 20 Z" fill="none" stroke="#181818" stroke-width="1.0" stroke-linejoin="miter"/><path d="M15.9 2.5 L15.9 20 L22 20 Z" fill="none" stroke="#e82020" stroke-width="1.0" stroke-linejoin="miter"/><path d="M12.6 1 V23" stroke="#6878e0" stroke-width=".9" stroke-dasharray="2.5 1.8"/></svg>
<svg class="ic" style="left:154px;top:126px" width="24" height="24" viewBox="0 0 24 24"><path d="M3.7 2.5 L3.7 8.2 L21.4 8.2 Z" fill="none" stroke="#181818" stroke-width="1.0" stroke-linejoin="miter"/><path d="M3.7 14 L21.4 14 L3.7 21.2 Z" fill="none" stroke="#e82020" stroke-width="1.0" stroke-linejoin="miter"/><path d="M2 11.1 H23" stroke="#6878e0" stroke-width="1" stroke-dasharray="2.5 1.8"/></svg>
<svg class="ic" style="left:183px;top:126px" width="24" height="24" viewBox="0 0 24 24"><path d="M2 6.8 H8" stroke="#7070ff" stroke-width="2"/><path d="M7.5 4.3 L11 6.8 L7.5 9.3 Z" fill="#fff" stroke="#7070ff" stroke-width=".8"/><path d="M19 5 A3.3 3.3 0 1 0 19.5 8.5" fill="none" stroke="#7070ff" stroke-width="2" stroke-dasharray="2 .7"/><path d="M17.5 2.5 L21 4.5 L18 7 Z" fill="#fff" stroke="#7070ff" stroke-width=".8"/><path d="M2.5 12 L2.5 21 L9 21 Z" fill="none" stroke="#181818" stroke-width="1.0" stroke-linejoin="miter"/><path d="M22.6 12.5 L22.6 19 L12.5 19 Z" fill="none" stroke="#e82020" stroke-width="1.0" stroke-linejoin="miter"/></svg>
<svg class="ic" style="left:212px;top:126px" width="24" height="24" viewBox="0 0 24 24"><path d="M2.2 10.4 L2.2 20.5 L8.7 20.5 Z" fill="none" stroke="#181818" stroke-width="1.0" stroke-linejoin="miter"/><path d="M14.5 2.5 L14.5 11 L21.4 11 Z" fill="none" stroke="#e82020" stroke-width="1.0" stroke-linejoin="miter"/><path d="M9.5 20 C14 19.5 17 17 17.8 13" fill="none" stroke="#8484ff" stroke-width="2.4"/><path d="M9.5 20 C14 19.5 17 17 17.8 13" fill="none" stroke="#d8d8ff" stroke-width="1"/></svg>
<svg class="ic" style="left:241px;top:126px" width="24" height="24" viewBox="0 0 24 24"><path d="M13.7 2.5 L21.6 14 M4.4 11 L10 14" stroke="#7070e0" stroke-width=".9"/><path d="M4.4 2.5 L13.7 2.5 L4.4 11 Z" fill="none" stroke="#181818" stroke-width="1.2" stroke-linejoin="miter"/><path d="M10 14 L15.9 9.8 L21.6 14 Z" fill="#ffc8c8" stroke="#e82020" stroke-width="1.1"/><path d="M10 22.5 V14.6 H21.6 V22.5" fill="none" stroke="#202020" stroke-width="1.4"/></svg>
<svg class="ic" style="left:276px;top:126px" width="24" height="24" viewBox="0 0 24 24"><path d="M2 12.5 L17.5 5" stroke="#e82020" stroke-width="1.1"/><path d="M6.3 19.7 L21.9 12.5" stroke="#303030" stroke-width="1.1"/><path d="M7.5 10.2 L10.4 17.8" stroke="#5070e0" stroke-width="1"/></svg>
<svg class="ic" style="left:305px;top:126px" width="24" height="24" viewBox="0 0 24 24"><path d="M2.2 12.5 L17.8 5" stroke="#e82020" stroke-width="1.1"/><path d="M6 20.2 L22 12.5" stroke="#303030" stroke-width="1.1"/><circle cx="10.9" cy="17.7" r="1.7" fill="#e00020"/></svg>
<svg class="ic" style="left:340px;top:126px" width="24" height="24" viewBox="0 0 24 24"><path d="M1.8 2.5 L21.5 11.8 M6.8 14.7 L2 21.2" stroke="#202020" stroke-width="1.1"/><path d="M11 7 L6.8 14.7" stroke="#e82020" stroke-width="1.1"/><g transform="translate(10.5,17.5) rotate(15) scale(1.15)"><path d="M0 0 L2.2 -4.5 C2.8 -5.8 4.8 -5 4.2 -3.6 L2.6 0.8 C2.2 2.2 0 2 0 0 Z" fill="#fff" stroke="#5a5af0" stroke-width=".9"/><path d="M-1.2 2.6 L0.6 3.4" stroke="#5a5af0" stroke-width="1"/></g></svg>
<svg class="ic" style="left:369px;top:126px" width="24" height="24" viewBox="0 0 24 24"><path d="M3 3.2 L11.7 6 M13 15.4 L3 21.9" stroke="#202020" stroke-width="1.1"/><path d="M11.7 6 L21.8 9.7 L13 15.4" fill="none" stroke="#e82020" stroke-width="1.1"/><g transform="translate(12.5,3.5) rotate(75) scale(1.0)"><path d="M0 0 L2.2 -4.5 C2.8 -5.8 4.8 -5 4.2 -3.6 L2.6 0.8 C2.2 2.2 0 2 0 0 Z" fill="#fff" stroke="#5a5af0" stroke-width=".9"/><path d="M-1.2 2.6 L0.6 3.4" stroke="#5a5af0" stroke-width="1"/></g><g transform="translate(14,19.5) rotate(35) scale(1.1)"><path d="M0 0 L2.2 -4.5 C2.8 -5.8 4.8 -5 4.2 -3.6 L2.6 0.8 C2.2 2.2 0 2 0 0 Z" fill="#fff" stroke="#5a5af0" stroke-width=".9"/><path d="M-1.2 2.6 L0.6 3.4" stroke="#5a5af0" stroke-width="1"/></g></svg>
<svg class="ic" style="left:398px;top:126px" width="24" height="24" viewBox="0 0 24 24"><path d="M16.5 2.5 L10 11.8" stroke="#202020" stroke-width="1.1"/><path d="M10 11.8 L4 20.2" stroke="#e82020" stroke-width="1.1"/><g transform="translate(12,17.5) rotate(15) scale(1.0)"><path d="M0 0 L2.2 -4.5 C2.8 -5.8 4.8 -5 4.2 -3.6 L2.6 0.8 C2.2 2.2 0 2 0 0 Z" fill="#fff" stroke="#5a5af0" stroke-width=".9"/><path d="M-1.2 2.6 L0.6 3.4" stroke="#5a5af0" stroke-width="1"/></g><path d="M18 14 l3 3.5 M21 14 l-3 3.5" stroke="#303030" stroke-width=".9"/></svg>
<svg class="ic" style="left:427px;top:126px" width="24" height="24" viewBox="0 0 24 24"><path d="M13.5 4.6 H6.5 Q2.5 4.6 2.5 8.5 V15 Q2.5 19 6.5 19 H13.5 M13.5 9.3 H8 V14 H13.5" fill="none" stroke="#202020" stroke-width="1.4"/><path d="M13.5 4.6 H20.5 V19 H13.5 M13.5 9.3 H20.5 M13.5 14 H20.5" fill="none" stroke="#e82020" stroke-width="1.1"/><path d="M8.5 16.5 H15" stroke="#8080ff" stroke-width="2.2"/><path d="M14.5 14.2 L18 16.5 L14.5 18.8 Z" fill="#fff" stroke="#7070ff" stroke-width=".8"/></svg>
<svg class="ic" style="left:456px;top:126px" width="24" height="24" viewBox="0 0 24 24"><path d="M0 13 L21 3 M11 1 L19 22 M5 21.5 L21 16" stroke="#f4b8a0" stroke-width=".9"/><path d="M6 7.2 H17.5 V16.9 H6 Z" fill="none" stroke="#7070e8" stroke-width=".9"/><path d="M8 16.9 A7.5 7.5 0 0 1 15.5 9.4 V16.9" fill="none" stroke="#404050" stroke-width=".9"/></svg>
<svg class="ic" style="left:491px;top:126px" width="24" height="24" viewBox="0 0 24 24"><path d="M2.9 4.6 H10.8 M19.5 13.3 V19.7" stroke="#585858" stroke-width="1.2"/><path d="M10.8 4.6 L19.5 13.3" stroke="#e84040" stroke-width="1.1"/></svg>
<svg class="ic" style="left:520px;top:126px" width="24" height="24" viewBox="0 0 24 24"><path d="M3.1 4.6 H10 M19.5 13.6 V19.7" stroke="#585858" stroke-width="1.2"/><path d="M10 4.6 A9.5 9.5 0 0 1 19.5 13.6" fill="none" stroke="#e84040" stroke-width="1.1"/><rect x="10" y="12.2" width="1.8" height="1.8" fill="#4040e0"/></svg>
<svg class="ic" style="left:555px;top:126px" width="24" height="24" viewBox="0 0 24 24"><path d="M14.2 1 L1.2 19" stroke="#101010" stroke-width="1.1"/><path d="M4 9 L13.5 8.5 L16.5 11.5 L4.5 11.5 Z" fill="#e0e0e0" stroke="#909090" stroke-width=".6"/><path d="M8.5 5 L11.5 4.5 L14.5 13 L12.5 13.5 Z" fill="#e8e8e8" stroke="#a0a0a0" stroke-width=".6"/><ellipse cx="19.6" cy="11.4" rx="3.5" ry="2.3" transform="rotate(-22 19.6 11.4)" fill="none" stroke="#e02020" stroke-width="1.5"/><ellipse cx="14.6" cy="18.6" rx="2.3" ry="3.6" transform="rotate(-10 14.6 18.6)" fill="none" stroke="#e02020" stroke-width="1.5"/><circle cx="8.7" cy="8.2" r="1.7" fill="#e00020"/></svg>
<svg class="ic" style="left:584px;top:126px" width="24" height="24" viewBox="0 0 24 24"><path d="M14.2 1 L1.2 19" stroke="#101010" stroke-width="1.1"/><path d="M4 9 L13.5 8.5 L16.5 11.5 L4.5 11.5 Z" fill="#e0e0e0" stroke="#909090" stroke-width=".6"/><path d="M8.5 5 L11.5 4.5 L14.5 13 L12.5 13.5 Z" fill="#e8e8e8" stroke="#a0a0a0" stroke-width=".6"/><ellipse cx="19.6" cy="11.4" rx="3.5" ry="2.3" transform="rotate(-22 19.6 11.4)" fill="none" stroke="#e02020" stroke-width="1.5"/><ellipse cx="14.6" cy="18.6" rx="2.3" ry="3.6" transform="rotate(-10 14.6 18.6)" fill="none" stroke="#e02020" stroke-width="1.5"/><circle cx="9.2" cy="6.4" r="1.6" fill="#e00020"/><circle cx="4.9" cy="14" r="1.6" fill="#e00020"/></svg>
<svg class="ic" style="left:613px;top:126px" width="24" height="24" viewBox="0 0 24 24"><path d="M7.2 2.9 V19.7 M16.9 2.9 V19.7" stroke="#404040" stroke-width="1.3"/><path d="M7.2 11.1 H16.9" stroke="#b0b0b0" stroke-width=".8"/><path d="M1 11.1 H7.2 M16.9 11.1 H23" stroke="#101010" stroke-width="1.4"/><circle cx="7.2" cy="11.1" r="1.6" fill="#e00020"/><circle cx="16.9" cy="11.1" r="1.6" fill="#e00020"/></svg>
<svg class="ic" style="left:642px;top:126px" width="24" height="24" viewBox="0 0 24 24"><path d="M4.8 2.9 V8 M4.8 10.5 V13.5 M4.8 16 V19.7" stroke="#909090" stroke-width="1.1"/><path d="M14.2 2.9 V19.7" stroke="#404040" stroke-width="1.3"/><path d="M5 9.2 H14 M5 14.7 H14" stroke="#d0d0d0" stroke-width=".7"/><path d="M14.2 9.2 H21 M14.2 14.7 H21" stroke="#101010" stroke-width="1.8"/><circle cx="14.2" cy="9.2" r="1.6" fill="#e00020"/><circle cx="14.2" cy="14.7" r="1.6" fill="#e00020"/></svg>
<svg class="ic" style="left:671px;top:126px" width="24" height="24" viewBox="0 0 24 24"><path d="M1.5 11.5 H22.5" stroke="#6070f0" stroke-width=".9"/><path d="M0.5 10.3 l2 2.4 M2.5 10.3 l-2 2.4 M21.5 10.3 l2 2.4 M23.5 10.3 l-2 2.4" stroke="#8090ff" stroke-width=".6"/><path d="M7 2.9 V19.7 M16.9 2.9 V19.7" stroke="#404040" stroke-width="1.3"/><path d="M7 11.5 H16.9" stroke="#101010" stroke-width="1.8"/><circle cx="7" cy="11.5" r="1.6" fill="#e00020"/><circle cx="16.9" cy="11.5" r="1.6" fill="#e00020"/></svg>
<svg class="ic" style="left:700px;top:126px" width="24" height="24" viewBox="0 0 24 24"><path d="M21.7 2.5 L13.5 10.5 M9.8 14.2 L2.2 21.9" stroke="#404040" stroke-width="1.2"/><circle cx="11.6" cy="12.3" r="1.7" fill="#e00020"/></svg>
<svg class="ic" style="left:735px;top:126px" width="24" height="24" viewBox="0 0 24 24"><path d="M6 19.7 L21.8 11.1" stroke="#303030" stroke-width="1.2"/><path d="M4.5 15.5 C5.5 7 13 3 19 7.5" fill="none" stroke="#2030e0" stroke-width="1.3"/><path d="M3.8 18.5 L2.8 13.8 L6.8 15 Z M21.5 9 L16.5 8.8 L19 5.2 Z" fill="#1020e0"/></svg>
<svg class="ic" style="left:770px;top:126px" width="24" height="24" viewBox="0 0 24 24"><rect x="2.6" y="6" width="19.4" height="11.6" fill="#fff"/><text x="4.3" y="16" font-family="Liberation Serif, serif" font-size="13" fill="#101010">A</text><path d="M15.5 7.5 V16.5" stroke="#101010" stroke-width="1"/></svg>
<svg class="ic" style="left:799px;top:126px" width="24" height="24" viewBox="0 0 24 24"><clipPath id="cpH"><path d="M2.4 21.2 V14.7 L8.9 9.2 H20 V21.2 Z"/></clipPath><path d="M2.4 21.2 V14.7 L8.9 9.2 H20 V21.2 Z" fill="#e4e4e4"/><g clip-path="url(#cpH)" stroke="#707070" stroke-width=".6"><path d="M-14 24 L2 8"/><path d="M-11 24 L5 8"/><path d="M-8 24 L8 8"/><path d="M-5 24 L11 8"/><path d="M-2 24 L14 8"/><path d="M1 24 L17 8"/><path d="M4 24 L20 8"/><path d="M7 24 L23 8"/><path d="M10 24 L26 8"/><path d="M13 24 L29 8"/><path d="M16 24 L32 8"/><path d="M19 24 L35 8"/></g><path d="M2.4 21.2 V14.7 L8.9 9.2 H20 V21.2 Z" fill="none" stroke="#303030" stroke-width="1.1"/><circle cx="13.9" cy="15.4" r="2.8" fill="#fff" stroke="#404040" stroke-width=".9"/><path d="M13.5 13.5 L14.3 10.8 L20 2.8 L22.3 4.3 L16.8 12.3 Z" fill="#d8a040" stroke="#7a5818" stroke-width=".6"/><path d="M20 2.8 L22.3 4.3 L21.3 5.7 L19 4.2 Z" fill="#e02020"/></svg>
<svg class="ic" style="left:834px;top:126px" width="24" height="24" viewBox="0 0 24 24"><rect x="2.6" y="14.4" width="8" height="6.2" rx=".9" fill="#707070" stroke="#404040" stroke-width=".9"/><rect x="14.4" y="4.8" width="7.6" height="5.8" rx=".9" fill="#707070" stroke="#404040" stroke-width=".9"/><rect x="6.6" y="8" width="11.4" height="9" fill="#fdf6d0" stroke="#303030" stroke-width=".9"/></svg>
<svg class="ic" style="left:863px;top:126px" width="24" height="24" viewBox="0 0 24 24"><rect x="6.6" y="8" width="11.4" height="9" fill="#fdf6d0" stroke="#303030" stroke-width=".9"/><rect x="2.6" y="14.4" width="8" height="6.2" rx=".9" fill="#707070" stroke="#404040" stroke-width=".9"/><rect x="14.4" y="4.8" width="7.6" height="5.8" rx=".9" fill="#707070" stroke="#404040" stroke-width=".9"/></svg>
<svg class="ic" style="left:898px;top:126px" width="24" height="24" viewBox="0 0 24 24"><g transform="translate(1.5,0.5)"><circle cx="5" cy="3" r="2.3" fill="#fff" stroke="#808080" stroke-width="1"/><path d="M1.5 6.5 H8.5 Q9.5 6.5 9.5 7.5 V14 H8 V9 H7.5 V22 H5.5 V15 H4.5 V22 H2.5 V9 H2 V14 H0.5 V7.5 Q0.5 6.5 1.5 6.5 Z" fill="#fff" stroke="#808080" stroke-width="1"/><path d="M2.7 14.5 H7.3 V21.8 H5.6 V15 H4.4 V21.8 H2.7 Z" fill="#a0a0a0"/></g><g transform="translate(13,0.5)"><circle cx="5" cy="3" r="2.3" fill="#fff" stroke="#808080" stroke-width="1"/><path d="M1.5 6.5 H8.5 Q9.5 6.5 9.5 7.5 V14 H8 V9 H7.5 V22 H5.5 V15 H4.5 V22 H2.5 V9 H2 V14 H0.5 V7.5 Q0.5 6.5 1.5 6.5 Z" fill="#fff" stroke="#808080" stroke-width="1"/><path d="M2.7 14.5 H7.3 V21.8 H5.6 V15 H4.4 V21.8 H2.7 Z" fill="#a0a0a0"/></g></svg>
<svg class="ic" style="left:929px;top:126px" width="24" height="24" viewBox="0 0 24 24"><text x="0.5" y="9.5" font-family="Liberation Sans, sans-serif" font-size="10" fill="#383838">0.00</text><path d="M1 12 L4 15 L1 18" fill="none" stroke="#a0a0ff" stroke-width="1"/><path d="M5 15 H20" stroke="#505050" stroke-width="1"/></svg>
<div class="a" style="left:114px;top:156px;width:726px;height:23px;background:#fff;border-right:1px solid #d8d8d8"></div>
<div class="a" style="left:841px;top:177.5px;width:104px;height:1.5px;background:#b8b8b8"></div>
<div class="a" style="left:114px;top:179px;width:22px;height:1px;background:#b0b0b0"></div><div class="a" style="left:114px;top:179px;width:1px;height:22px;background:#a0a0a0"></div><div class="a" style="left:135px;top:180px;width:1px;height:21px;background:#fafafa"></div><div class="a" style="left:115px;top:200px;width:21px;height:1px;background:#fafafa"></div>
<svg class="ic" style="left:126px;top:157.5px" width="18" height="18" viewBox="0 0 18 18"><circle cx="8.3" cy="8.6" r="5.4" fill="#fbfbfd" stroke="url(#gQ)" stroke-width="2"/><path d="M8.3 8.6 L8.3 5 M8.3 8.6 L5 8.6" stroke="#f0d8c0" stroke-width=".8"/><path d="M7.8 8.1 L14 14.4" stroke="#e8a848" stroke-width="1.7" stroke-linecap="round"/><path d="M7.6 7.9 L10.7 11" stroke="#f4e090" stroke-width="1.5" stroke-linecap="round"/></svg>
<div class="a" style="left:444.5px;top:161.7px;font-size:11px;white-space:nowrap;letter-spacing:-.05px;font-family:'Liberation Sans',sans-serif">* Bez názvu 2</div>
<svg class="ic" style="left:813px;top:160px" width="14" height="14" viewBox="0 0 14 14"><rect x=".6" y=".6" width="12.8" height="12.8" rx="2" fill="#e8805c" stroke="#d46040" stroke-width="1.2"/><path d="M4 4 L10 10 M10 4 L4 10" stroke="#fff" stroke-width="2.2"/></svg>
<svg class="ic" style="left:895px;top:192px" width="8" height="6" viewBox="0 0 8 6"><path d="M1 1.5 H7.5 L4.2 5 Z" fill="#000"/></svg>
<svg class="ic" style="left:128px;top:381px" width="6" height="9" viewBox="0 0 6 9"><path d="M1.5 1.5 V8 L5 4.7 Z" fill="#000"/></svg>
<div class="a" style="left:80px;top:156px;width:1px;height:655px;background:#b4b4b4"></div><div class="a" style="left:81px;top:156px;width:1px;height:655px;background:#fbfbfb"></div>
<div class="a" style="left:113px;top:156px;width:1px;height:24px;background:#c8c8c8"></div>
<div class="a" style="left:113px;top:201px;width:1px;height:610px;background:#b8b8b8"></div>
<div class="gh" style="left:-1px;top:158px;width:78px"></div><div class="gh" style="left:84px;top:158px;width:26px"></div>
<div class="sb" style="left:-1px;top:165px;width:80px;height:30px"><svg style="left:36px;top:9.5px" width="10" height="10" viewBox="0 0 10 10"><path d="M9 0.5 V9 L0.5 4.7 Z" fill="#000"/></svg></div>
<div class="sb" style="left:-1px;top:205px"><svg width="32" height="32" viewBox="0 0 32 32"><path d="M12 16 h8.5 M16.3 11.7 v8.6" stroke="#000" stroke-width="1.3"/></svg></div>
<div class="sb" style="left:39px;top:205px"><svg width="32" height="32" viewBox="0 0 32 32"><circle cx="3.7" cy="4" r="2.2" fill="#e81010"/><circle cx="3.7" cy="12" r="2.2" fill="#e81010"/><circle cx="3.7" cy="20" r="2.2" fill="#e81010"/><circle cx="3.7" cy="28" r="2.2" fill="#e81010"/><circle cx="11.7" cy="4" r="2.2" fill="#e81010"/><circle cx="11.7" cy="12" r="2.2" fill="#e81010"/><circle cx="11.7" cy="20" r="2.2" fill="#e81010"/><circle cx="11.7" cy="28" r="2.2" fill="#e81010"/><circle cx="19.7" cy="4" r="2.2" fill="#e81010"/><circle cx="19.7" cy="12" r="2.2" fill="#e81010"/><circle cx="19.7" cy="20" r="2.2" fill="#e81010"/><circle cx="19.7" cy="28" r="2.2" fill="#e81010"/><circle cx="27.7" cy="4" r="2.2" fill="#e81010"/><circle cx="27.7" cy="12" r="2.2" fill="#e81010"/><circle cx="27.7" cy="20" r="2.2" fill="#e81010"/><circle cx="27.7" cy="28" r="2.2" fill="#e81010"/></svg></div>
<div class="sb" style="left:-1px;top:253px"><svg width="32" height="32" viewBox="0 0 32 32"><path d="M13.9 4.2 C13.9 12 20 18.9 28.2 18.9" fill="none" stroke="#101010" stroke-width="1.3"/><path d="M4.4 15.9 L28.2 28.4" stroke="#101010" stroke-width="1.3" /><circle cx="13.9" cy="4.2" r="2.2" fill="#e80010"/><circle cx="28.2" cy="18.9" r="2.2" fill="#e80010"/><circle cx="4.4" cy="15.9" r="2.2" fill="#e80010"/><circle cx="28.2" cy="28.4" r="2.2" fill="#e80010"/></svg></div>
<div class="sb" style="left:39px;top:253px"><svg width="32" height="32" viewBox="0 0 32 32"><path d="M3.5 17.3 L28.2 3.9" stroke="#101010" stroke-width="1.3" /><path d="M13.1 28.4 C13.5 20 19 14.5 27.7 13.9" fill="none" stroke="#101010" stroke-width="1.3"/><circle cx="3.5" cy="17.3" r="2.2" fill="#e80010"/><circle cx="9.7" cy="14.0" r="2.2" fill="#e80010"/><circle cx="15.8" cy="10.6" r="2.2" fill="#e80010"/><circle cx="22.0" cy="7.2" r="2.2" fill="#e80010"/><circle cx="28.2" cy="3.9" r="2.2" fill="#e80010"/><circle cx="13.1" cy="28.4" r="2.2" fill="#e80010"/><circle cx="14" cy="22.5" r="2.2" fill="#e80010"/><circle cx="16.9" cy="17.7" r="2.2" fill="#e80010"/><circle cx="21.8" cy="15.4" r="2.2" fill="#e80010"/><circle cx="27.7" cy="13.9" r="2.2" fill="#e80010"/></svg></div>
<div class="sb" style="left:-1px;top:293px"><svg width="32" height="32" viewBox="0 0 32 32"><path d="M6.5 4.7 L17.9 18" stroke="#101010" stroke-width="1.3" /><path d="M28.2 13.9 C22 14.5 15.5 19 13.9 27.7" fill="none" stroke="#101010" stroke-width="1.3"/><path d="M14.8 13.5 C16 10.5 21.5 10 23.5 13.8" fill="none" stroke="#808080" stroke-width=".7"/><circle cx="17.9" cy="18" r="2.2" fill="#e80010"/></svg></div>
<div class="sb" style="left:39px;top:293px"><svg width="32" height="32" viewBox="0 0 32 32"><circle cx="19.5" cy="13.4" r="7.8" fill="none" stroke="#101010" stroke-width="1.3"/><path d="M12.6 9.9 L4 26" stroke="#101010" stroke-width="1.3" /><circle cx="12.6" cy="9.9" r="2.2" fill="#e80010"/></svg></div>
<div class="sb" style="left:-1px;top:333px"><svg width="32" height="32" viewBox="0 0 32 32"><path d="M3.5 17.4 L28.5 5" stroke="#101010" stroke-width="1.3" /><path d="M28.2 13.6 C20 14.5 14.5 20 13.4 28.1" fill="none" stroke="#101010" stroke-width="1.3"/><circle cx="16.2" cy="11" r="2.2" fill="#e80010"/><circle cx="28.1" cy="28.1" r="2.2" fill="#e80010"/></svg></div>
<div class="sb" style="left:39px;top:333px"><svg width="32" height="32" viewBox="0 0 32 32"><circle cx="15.6" cy="16.5" r="11" fill="none" stroke="#101010" stroke-width="1.3"/><circle cx="15.6" cy="16.5" r="2.2" fill="#e80010"/><circle cx="15.6" cy="5.5" r="2.2" fill="#e80010"/><circle cx="15.6" cy="27.5" r="2.2" fill="#e80010"/><circle cx="4.6" cy="16.5" r="2.2" fill="#e80010"/><circle cx="26.6" cy="16.5" r="2.2" fill="#e80010"/></svg></div>
<div class="sb" style="left:-1px;top:381px"><svg width="32" height="32" viewBox="0 0 32 32"><path d="M3.9 16.4 L29.1 2.9" stroke="#101010" stroke-width="1.3" /><path d="M29.1 13 C23 13.5 15.5 18 13.9 28" fill="none" stroke="#101010" stroke-width="1.3"/><circle cx="16.5" cy="9.5" r="2.2" fill="#e80010"/><circle cx="17.9" cy="17.3" r="2.2" fill="#e80010"/></svg></div>
<div class="sb" style="left:39px;top:381px"><svg width="32" height="32" viewBox="0 0 32 32"><rect x="1.8" y="5" width="27.2" height="21.3" fill="none" stroke="#101010" stroke-width="1.4"/><path d="M10 20.2 L21.3 11.2" stroke="#303030" stroke-width="0.8" /><path d="M3.5 23.5 l2 -1 M27.5 7.5 l-2 1" stroke="#606060" stroke-width=".6"/><circle cx="15.2" cy="15.5" r="2.2" fill="#e80010"/></svg></div>
<div class="sb" style="left:-1px;top:429px"><svg width="32" height="32" viewBox="0 0 32 32"><path d="M5.3 15.9 L29.5 3.3" stroke="#101010" stroke-width="1.3" /><path d="M29.1 12.8 C23 13.5 16.5 18 14.8 27.1" fill="none" stroke="#101010" stroke-width="1.3"/><circle cx="13.4" cy="11.9" r="2.2" fill="#e80010"/><circle cx="17.9" cy="18.1" r="2.2" fill="#e80010"/><g transform="translate(10.5,7.5) rotate(-25)"><path d="M0 0 L-4.5 -1.8 L-4.5 1.8 Z" fill="#101010"/><path d="M-4 0 H-8" stroke="#101010" stroke-width="1.6"/></g><g transform="translate(20.5,21.5) rotate(-80)"><path d="M0 0 L-4.5 -1.8 L-4.5 1.8 Z" fill="#101010"/><path d="M-4 0 H-8" stroke="#101010" stroke-width="1.6"/></g></svg></div>
<div class="sb" style="left:39px;top:429px"><svg width="32" height="32" viewBox="0 0 32 32"><path d="M11.8 11.9 L27.8 3.3" stroke="#101010" stroke-width="1.1" stroke-dasharray="2.5 2"/><circle cx="11.8" cy="11.9" r="2.2" fill="#e80010"/><circle cx="27.8" cy="3.3" r="1.6" fill="#101010"/><g transform="translate(8.5,9) rotate(-20)"><path d="M0 0 L-4.5 -1.8 L-4.5 1.8 Z" fill="#101010"/><path d="M-4 0 H-8" stroke="#101010" stroke-width="1.6"/></g><g transform="translate(7,14) rotate(-25)"><path d="M0 0 L-4.5 -1.8 L-4.5 1.8 Z" fill="#101010"/><path d="M-4 0 H-8" stroke="#101010" stroke-width="1.6"/></g><text x="2.5" y="26.5" font-family="DejaVu Sans, Liberation Sans, sans-serif" font-size="13" fill="#101010">1</text><text x="23.5" y="15.5" font-family="DejaVu Sans, Liberation Sans, sans-serif" font-size="13" fill="#101010">2</text></svg></div>
<div class="sb" style="left:-1px;top:477px"><svg width="32" height="32" viewBox="0 0 32 32"><path d="M2.7 13.1 L30.3 21.4" stroke="#101010" stroke-width="1.3" /><path d="M23.8 2.1 L16.5 29.2" stroke="#101010" stroke-width="1.3" /><circle cx="20" cy="17.9" r="2.2" fill="#e80010"/></svg></div>
<div class="sb" style="left:39px;top:477px"><svg width="32" height="32" viewBox="0 0 32 32"><path d="M4 17.6 L16.1 21.1" stroke="#101010" stroke-width="1.3" /><path d="M27 5.9 L23.5 18.8" stroke="#101010" stroke-width="1.3" /><circle cx="22.1" cy="23.1" r="2.2" fill="#e80010"/></svg></div>
<div class="sb" style="left:-1px;top:573px"><svg width="32" height="32" viewBox="0 0 32 32"><text x="3.5" y="11" font-family="DejaVu Sans, Liberation Sans, sans-serif" font-size="12" fill="#101010">y</text><path d="M13 2.5 V19.5 H30.7" fill="none" stroke="#101010" stroke-width="1.3"/><text x="23.5" y="29" font-family="DejaVu Sans, Liberation Sans, sans-serif" font-size="12" fill="#101010">x</text><circle cx="28.1" cy="3.9" r="1.9" fill="#e80010"/></svg></div>
<div class="sb" style="left:39px;top:573px"><svg width="32" height="32" viewBox="0 0 32 32"><text x="5.5" y="14.5" font-family="DejaVu Sans, Liberation Sans, sans-serif" font-size="12" fill="#101010">r</text><path d="M1.8 25.9 L20.7 6.9 C25.5 11 28.5 18 29 25.9 Z" fill="none" stroke="#101010" stroke-width="1.3"/><text x="17.5" y="21.5" font-family="DejaVu Sans, Liberation Sans, sans-serif" font-size="11" fill="#101010">a</text><circle cx="20.7" cy="6.9" r="1.9" fill="#e80010"/></svg></div>
<div class="sb" style="left:-1px;top:621px"><svg width="32" height="32" viewBox="0 0 32 32"><path d="M7 6 L26 6" stroke="#101010" stroke-width="1" stroke-dasharray="1 1.5"/><path d="M7 6 L7 24.5" stroke="#101010" stroke-width="1" stroke-dasharray="1 1.5"/><circle cx="7" cy="6" r="2.7" fill="#e80010"/><circle cx="26" cy="6" r="1.5" fill="#101010"/><circle cx="7" cy="24.5" r="1.5" fill="#101010"/><text x="22.5" y="18.5" font-family="DejaVu Sans, Liberation Sans, sans-serif" font-size="12" fill="#101010">2</text><text x="11.5" y="27.5" font-family="DejaVu Sans, Liberation Sans, sans-serif" font-size="12" fill="#101010">1</text></svg></div>
<div class="sb" style="left:39px;top:621px"><svg width="32" height="32" viewBox="0 0 32 32"><path d="M6.1 24.5 L24.7 24.5" stroke="#101010" stroke-width="1" stroke-dasharray="1 1.5"/><path d="M24.4 6 L24.4 24.5" stroke="#101010" stroke-width="1" stroke-dasharray="1 1.5"/><circle cx="24.7" cy="24.5" r="2.7" fill="#e80010"/><circle cx="24.4" cy="6" r="1.5" fill="#101010"/><circle cx="6.1" cy="24.5" r="1.5" fill="#101010"/><text x="15.5" y="11.5" font-family="DejaVu Sans, Liberation Sans, sans-serif" font-size="12" fill="#101010">2</text><text x="3.5" y="20.5" font-family="DejaVu Sans, Liberation Sans, sans-serif" font-size="12" fill="#101010">1</text></svg></div>
<div class="sb" style="left:-1px;top:669px"><svg width="32" height="32" viewBox="0 0 32 32"><path d="M3.5 5.8 Q3.5 4.8 4.5 4.8 H28.5 Q29.5 4.8 29.5 5.8 V25 Q29.5 26 28.5 26 H13 Q12 26 12 25 V21 H4.5 Q3.5 21 3.5 20 Z" fill="none" stroke="#f0a0a8" stroke-width=".9"/><circle cx="11.3" cy="13" r="3.6" fill="none" stroke="#f0a0a8" stroke-width=".9"/><path d="M15 21 H24.5 V11.5 Z" fill="none" stroke="#f0a0a8" stroke-width=".9"/><circle cx="16.5" cy="15.3" r="1.9" fill="#e00020"/></svg></div>
<div class="sb" style="left:-1px;top:717px;background:linear-gradient(#bdbdbd,#c8c8c8);border-color:#a8a8a8"><svg width="32" height="32" viewBox="0 0 32 32"><path d="M12 16 h8.5 M16.3 11.7 v8.6" stroke="#000" stroke-width="1.3"/></svg></div>
<div class="sb" style="left:39px;top:717px"><svg width="32" height="32" viewBox="0 0 32 32"><path d="M1.8 15.3 L28.2 15.3" stroke="#101010" stroke-width="1.3" /><path d="M14.9 1.8 L14.9 28.6" stroke="#101010" stroke-width="1.3" /><circle cx="14.9" cy="15.3" r="4" fill="none" stroke="#e82020" stroke-width="1"/><path d="M10.9 15.3 H18.9 M14.9 11.3 V19.3" stroke="#e82020" stroke-width=".9"/></svg></div>
<div class="sb" style="left:-1px;top:757px"><svg width="32" height="32" viewBox="0 0 32 32"><path d="M2.7 15.3 L29.5 15.3" stroke="#101010" stroke-width="1.3" /><circle cx="16" cy="15.3" r="4" fill="none" stroke="#e82020" stroke-width="1"/><path d="M12 15.3 H20 M16 11.3 V19.3" stroke="#e82020" stroke-width=".9"/></svg></div>
<div class="sb" style="left:39px;top:757px"><svg width="32" height="32" viewBox="0 0 32 32"><path d="M14.9 2.2 L14.9 29" stroke="#101010" stroke-width="1.3" /><circle cx="14.9" cy="15.5" r="4" fill="none" stroke="#e82020" stroke-width="1"/><path d="M10.9 15.5 H18.9 M14.9 11.5 V19.5" stroke="#e82020" stroke-width=".9"/></svg></div>
<div class="sb" style="left:-1px;top:797px"><svg width="32" height="32" viewBox="0 0 32 32"><path d="M6.5 3 L8 8 M12 2.5 L13 9 M17.5 5 L20 9.5" stroke="#a4a4a4" stroke-width="1.3"/></svg></div>
<div class="a" style="left:-1px;top:525px;width:40px;height:40px;background:#c2c2c2;border:1px solid #b0b0b0"><span style="position:absolute;left:6.5px;top:12px;font-family:'DejaVu Sans',sans-serif;font-size:12px;color:#101010">Auto</span></div>
<svg class="ic" style="left:85.5px;top:167px" width="24" height="24" viewBox="0 0 24 24"><path d="M1.7 10.3 L4.5 17 M16.9 3.9 L20.1 11" stroke="#101010" stroke-width="1"/><path d="M2.8 12.5 L18.2 6.1" stroke="#101010" stroke-width="1"/><path d="M0 0 L4.6 -1.7 L4.6 1.7 Z" transform="translate(2.8,12.5) rotate(-22.5)" fill="#101010"/><path d="M0 0 L4.6 -1.7 L4.6 1.7 Z" transform="translate(18.2,6.1) rotate(157.5)" fill="#101010"/><path d="M6.5 20.2 L21.7 13" stroke="#f02828" stroke-width="1"/></svg>
<svg class="ic" style="left:85px;top:196px" width="24" height="24" viewBox="0 0 24 24"><path d="M2.3 8.8 L8.6 21.7 M17.4 2 L20.3 8.5" stroke="#101010" stroke-width="1"/><path d="M3 10.8 L19 4" stroke="#101010" stroke-width="1"/><path d="M0 0 L4.6 -1.7 L4.6 1.7 Z" transform="translate(3,10.8) rotate(-23)" fill="#101010"/><path d="M0 0 L4.6 -1.7 L4.6 1.7 Z" transform="translate(19,4) rotate(157)" fill="#101010"/></svg>
<svg class="ic" style="left:85.3px;top:224.5px" width="24" height="24" viewBox="0 0 24 24"><path d="M3.5 6 V19 M20.5 6 V11.5" stroke="#101010" stroke-width="1.2"/><path d="M3.5 7.8 H20.5" stroke="#101010" stroke-width="1"/><path d="M0 0 L4.6 -1.7 L4.6 1.7 Z" transform="translate(3.8,7.8) rotate(0)" fill="#101010"/><path d="M0 0 L4.6 -1.7 L4.6 1.7 Z" transform="translate(20.2,7.8) rotate(180)" fill="#101010"/></svg>
<svg class="ic" style="left:84px;top:253.5px" width="24" height="24" viewBox="0 0 24 24"><path d="M5 3.5 H11 M5 20.5 H19" stroke="#101010" stroke-width="1.2"/><path d="M7.5 3.5 V20.5" stroke="#101010" stroke-width="1"/><path d="M0 0 L4.6 -1.7 L4.6 1.7 Z" transform="translate(7.5,3.8) rotate(90)" fill="#101010"/><path d="M0 0 L4.6 -1.7 L4.6 1.7 Z" transform="translate(7.5,20.2) rotate(-90)" fill="#101010"/></svg>
<svg class="ic" style="left:86.5px;top:291px" width="24" height="24" viewBox="0 0 24 24"><path d="M4.5 15.5 H19 M15.5 5.5 V19" stroke="#101010" stroke-width="1.1"/><text x="0" y="17.5" font-family="DejaVu Sans, sans-serif" font-size="7" fill="#202020">y</text><text x="13.5" y="6" font-family="DejaVu Sans, sans-serif" font-size="6.5" fill="#202020">x</text></svg>
<svg class="ic" style="left:85px;top:319.3px" width="24" height="24" viewBox="0 0 24 24"><path d="M21 7.5 H13.5 L5.5 15" fill="none" stroke="#101010" stroke-width="1"/><path d="M0 0 L4.6 -1.7 L4.6 1.7 Z" transform="translate(4,16.5) rotate(-43)" fill="#101010"/></svg>
<svg class="ic" style="left:85px;top:351.5px" width="24" height="24" viewBox="0 0 24 24"><circle cx="9.5" cy="15.5" r="6" fill="none" stroke="#101010" stroke-width="1"/><path d="M9.5 15.5 L17 4.5" stroke="#101010" stroke-width="1"/><path d="M0 0 L4.6 -1.7 L4.6 1.7 Z" transform="translate(13,10.3) rotate(-56)" fill="#101010"/><path d="M0 0 L4.6 -1.7 L4.6 1.7 Z" transform="translate(13,10.3) rotate(124)" fill="#101010"/><text x="17.8" y="12" font-family="DejaVu Sans, sans-serif" font-size="8" fill="#202020">R</text></svg>
<svg class="ic" style="left:84.8px;top:381.6px" width="24" height="24" viewBox="0 0 24 24"><circle cx="12" cy="12" r="8.8" fill="none" stroke="#101010" stroke-width="1"/><path d="M4.3 15.3 L19.7 8.7" stroke="#101010" stroke-width="1"/><path d="M0 0 L4.6 -1.7 L4.6 1.7 Z" transform="translate(4.3,15.3) rotate(-23)" fill="#101010"/><path d="M0 0 L4.6 -1.7 L4.6 1.7 Z" transform="translate(19.7,8.7) rotate(157)" fill="#101010"/></svg>
<svg class="ic" style="left:85px;top:417px" width="24" height="24" viewBox="0 0 24 24"><path d="M7.5 5.5 L5 13.4 M8.2 19 H17.8" stroke="#101010" stroke-width="1.2" fill="none"/><path d="M8.5 6.3 C13 8.5 16 12.5 16.5 17.5" stroke="#101010" stroke-width="1" fill="none"/><path d="M0 0 L4.6 -1.7 L4.6 1.7 Z" transform="translate(8.3,6.2) rotate(28)" fill="#101010"/><path d="M0 0 L4.6 -1.7 L4.6 1.7 Z" transform="translate(16.6,18) rotate(-98)" fill="#101010"/></svg>
<svg class="ic" style="left:84.6px;top:450.2px" width="24" height="24" viewBox="0 0 24 24"><path d="M3.5 11 V18.5 M20.5 11 V18.5" stroke="#101010" stroke-width="1.3"/><path d="M3.5 14.5 H20.5" stroke="#101010" stroke-width="1"/><path d="M0 0 L4.6 -1.7 L4.6 1.7 Z" transform="translate(3.8,14.5) rotate(0)" fill="#101010"/><path d="M0 0 L4.6 -1.7 L4.6 1.7 Z" transform="translate(20.2,14.5) rotate(180)" fill="#101010"/><text x="7" y="12" font-family="DejaVu Sans, sans-serif" font-size="6.5" fill="#5060c0">3D</text></svg>
<div class="hs" style="left:86px;top:283.5px;width:23px"></div>
<div class="hs" style="left:86px;top:347px;width:23px"></div>
<div class="hs" style="left:86px;top:411.5px;width:23px"></div>
<div class="hs" style="left:86px;top:446px;width:23px"></div>
<svg id="canvas" class="a" width="809" height="610" viewBox="0 0 809 610" shape-rendering="crispEdges"><circle cx="535.3" cy="349.5" r="47" fill="none" stroke="#784e4a" stroke-width="1"/><path d="M427 166.3 L534.5 292.3 L518.6 306.6 L410.2 180" stroke="#784e4a" stroke-width="1" fill="none"/><path d="M658.3 177.6 L573.5 317.6 L590.8 330.8 L677.2 190" stroke="#784e4a" stroke-width="1" fill="none"/><path d="M326.7 397 L481 333 L485.5 354.6 L336 416" stroke="#784e4a" stroke-width="1" fill="none"/><path d="M516 561.6 L501.6 396.6 L522.9 395 L536 560" stroke="#784e4a" stroke-width="1" fill="none"/><path d="M737.2 413.3 L575 375.9 L569.4 396.6 L732.4 434.5" stroke="#784e4a" stroke-width="1" fill="none"/><path d="M532.8 138.8 L547 304" stroke="#784e4a" stroke-width="1" fill="none" /><path d="M553.8 136.9 L568.8 302" stroke="#784e4a" stroke-width="1" fill="none" /><path d="M339 265 L501 303" stroke="#784e4a" stroke-width="1" fill="none" /><path d="M334 287 L496 324" stroke="#784e4a" stroke-width="1" fill="none" /><path d="M479.8 368 L394.7 509.7" stroke="#784e4a" stroke-width="1" fill="none" /><path d="M499 379.3 L413.2 520.7" stroke="#784e4a" stroke-width="1" fill="none" /><path d="M551.8 392.9 L661 517.6" stroke="#784e4a" stroke-width="1" fill="none" /><path d="M536 407 L644 531.8" stroke="#784e4a" stroke-width="1" fill="none" /><path d="M581.6 347.5 L734 281.9" stroke="#784e4a" stroke-width="1" fill="none" /><path d="M589.8 366.8 L743 302" stroke="#784e4a" stroke-width="1" fill="none" /><path d="M547 304 L568.8 302" stroke="#784e4a" stroke-width="1" fill="none" /><path d="M501 303 L496 324" stroke="#784e4a" stroke-width="1" fill="none" /><path d="M479.8 368 L499 379.3" stroke="#784e4a" stroke-width="1" fill="none" /><path d="M551.8 392.9 L536 407" stroke="#784e4a" stroke-width="1" fill="none" /><path d="M581.6 347.5 L589.8 366.8" stroke="#784e4a" stroke-width="1" fill="none" /><path d="M0 349.5 H809" stroke="#c81c1c" stroke-width="1" stroke-dasharray="9 3 3 3 3 3"/><path d="M534.5 0 V610" stroke="#800808" stroke-width="1" stroke-dasharray="9 3 3 3 3 3" stroke-dashoffset="2"/><path d="M535.5 0 V610" stroke="#c82038" stroke-width="1" stroke-dasharray="9 3 3 3 3 3" stroke-dashoffset="2"/><path d="M0 185.5 H809" stroke="#d8b044" stroke-width="1" stroke-dasharray="4 2"/><path d="M763.5 0 V610" stroke="#d8b044" stroke-width="1" stroke-dasharray="4 2" stroke-dashoffset="3"/><circle cx="763.5" cy="185.5" r="5.5" fill="none" stroke="#e0b040" stroke-width="1"/><path d="M535.5 349.5 L763.5 185.5" stroke="#8a9cb0" stroke-width="1" fill="none" stroke-dasharray="12 7 1.5 7" stroke-dashoffset="1.6"/><rect x="577" y="344.5" width="10" height="10" fill="#1898c8"/><rect x="548.8" y="131.9" width="10" height="10" fill="#0000c4"/><rect x="334" y="260" width="10" height="10" fill="#0000c4"/><rect x="496" y="298" width="10" height="10" fill="#0000c4"/><rect x="491" y="319" width="10" height="10" fill="#0000c4"/><rect x="542" y="299" width="10" height="10" fill="#0000c4"/><rect x="563.8" y="297" width="10" height="10" fill="#0000c4"/><rect x="475" y="363" width="10" height="10" fill="#0000c4"/><rect x="494" y="374.3" width="10" height="10" fill="#0000c4"/><rect x="389.7" y="504.7" width="10" height="10" fill="#0000c4"/><rect x="546.8" y="387.9" width="10" height="10" fill="#0000c4"/><rect x="531" y="402" width="10" height="10" fill="#0000c4"/><rect x="639" y="526.8" width="10" height="10" fill="#0000c4"/><rect x="576.8" y="342" width="10" height="10" fill="#0000c4"/><rect x="584.8" y="361.8" width="10" height="10" fill="#0000c4"/><rect x="738" y="297" width="10" height="10" fill="#0000c4"/><rect x="527.8" y="133.8" width="10" height="10" fill="#dc0030"/><rect x="329" y="282" width="10" height="10" fill="#dc0030"/><rect x="408.2" y="515.7" width="10" height="10" fill="#dc0030"/><rect x="656" y="512.6" width="10" height="10" fill="#dc0030"/><rect x="729" y="276.9" width="10" height="10" fill="#dc0030"/><rect x="530" y="298" width="10" height="10" fill="#1898c8"/><rect x="483" y="344.3" width="10" height="10" fill="#1898c8"/><rect x="530" y="391" width="10" height="10" fill="#1898c8"/><circle cx="535.5" cy="349.5" r="5" fill="#1010c0" stroke="#d04868" stroke-width="1"/><path d="M530.5 349.5 h10 M535.5 344.5 v10" stroke="#d04868" stroke-width="1"/></svg>
</body></html>
